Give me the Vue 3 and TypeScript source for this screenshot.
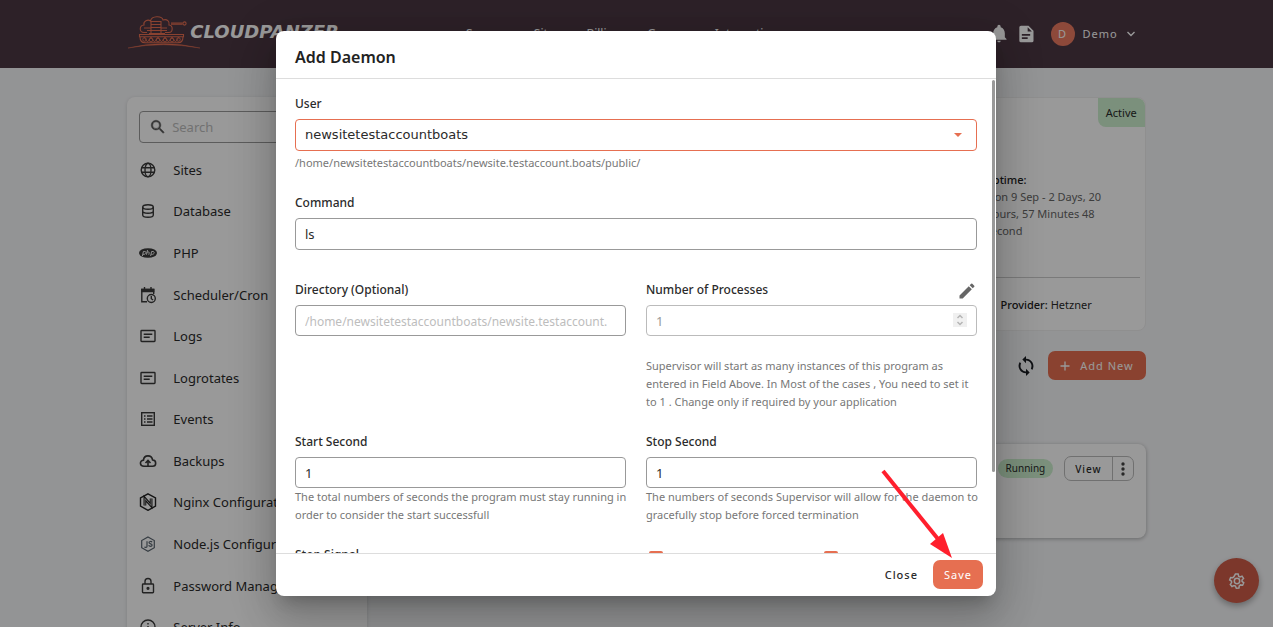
<script setup lang="ts">
import { ref } from 'vue'

interface MenuItem { label: string; icon: string }

const menu: MenuItem[] = [
  { label: 'Sites', icon: 'globe' },
  { label: 'Database', icon: 'database' },
  { label: 'PHP', icon: 'php' },
  { label: 'Scheduler/Cron', icon: 'schedule' },
  { label: 'Logs', icon: 'log' },
  { label: 'Logrotates', icon: 'log' },
  { label: 'Events', icon: 'list' },
  { label: 'Backups', icon: 'backup' },
  { label: 'Nginx Configuration', icon: 'nginx' },
  { label: 'Node.js Configuration', icon: 'node' },
  { label: 'Password Manager', icon: 'lock' },
  { label: 'Server Info', icon: 'info' },
]
const links = ['Servers', 'Sites', 'Billing', 'Groups', 'Integrations']

const search = ref('')
const user = ref('newsitetestaccountboats')
const command = ref('ls')
const directory = ref('')
const processes = ref(1)
const startSecond = ref('1')
const stopSecond = ref('1')
</script>

<template>
  <div class="page">
    <header class="topbar">
      <div class="container bar">
        <a class="brand" href="#">
          <svg class="tank" width="74" height="34" viewBox="0 0 74 34" fill="none" stroke="#e66f51" stroke-width="1.1">
            <path d="M20 17.500h-3c-5 0-5-7 0-7.500-1-4 4-6 6.500-4C24.500.5 35 .5 36 5c4-1.500 7 1.500 6 5 4.500.5 4 7.500 0 7.500h-4" />
            <path d="M24 6.500h10v12H24zM24 9.500h10M24 12.500h10M24 15.500h10M17 13h7M34 13h6M20 15.500h4M34 15.500h6M44 8h11.500M44 9.300h11.500" />
            <circle cx="57.500" cy="8.500" r="1.600" />
            <path d="M12.500 19.500h44v2.200h-44zM13 21.700c0 4 2 6 5 6h33c3 0 5-2 5-6M22 18.500h16" />
            <path d="m17 22 3.500 5 3.500-5 3.500 5 3.500-5 3.500 5 3.500-5 3.500 5 3.500-5 3.500 5 3.500-5" stroke-width=".8" />
            <g stroke-width=".9"><circle cx="17.500" cy="24.500" r="1.800" /><circle cx="24" cy="25" r="1.800" /><circle cx="31" cy="25" r="1.800" /><circle cx="38" cy="25" r="1.800" /><circle cx="45" cy="25" r="1.800" /><circle cx="51.500" cy="24.500" r="1.800" /></g>
            <path d="M1 33Q36 24.500 73 33Q36 26.500 1 33z" fill="#e66f51" stroke-width=".4" />
          </svg>
          <span class="wordmark">CLOUDPANZER</span>
        </a>
        <nav class="links"><a v-for="l in links" :key="l" href="#">{{ l }}</a></nav>
        <div class="account">
          <button class="plain" aria-label="Notifications">
            <svg width="20" height="20" viewBox="0 0 24 24" fill="#fff"><path d="M12 22c1.100 0 2-.9 2-2h-4c0 1.100.9 2 2 2m7-6v-5c0-3.500-1.900-6.400-5-7.200V3a2 2 0 0 0-4 0v.8C6.900 4.600 5 7.500 5 11v5l-2 2v1h18v-1z" /></svg>
          </button>
          <button class="plain" aria-label="Documents">
            <svg width="20" height="20" viewBox="0 0 24 24" fill="#fff" fill-rule="evenodd"><path d="M6 2h9l6 6v12a2 2 0 0 1-2 2H6a2 2 0 0 1-2-2V4a2 2 0 0 1 2-2m8 2v5h5zM7 12v2h10v-2zm0 4v2h7v-2z" /></svg>
          </button>
          <button class="profile">
            <span class="avatar">D</span><span>Demo</span>
            <svg width="10" height="10" viewBox="0 0 10 10" fill="none" stroke="#fff" stroke-width="1.400"><path d="m1.500 3 3.500 3.500L8.500 3" /></svg>
          </button>
        </div>
      </div>
    </header>

    <div class="container body">
      <aside class="sidebar">
        <label class="search">
          <svg width="20" height="20" viewBox="0 0 24 24" fill="#555"><path d="M15.500 14h-.8l-.3-.3a6.500 6.500 0 1 0-.7.7l.3.300v.8l5 5 1.500-1.500zm-6 0a4.500 4.500 0 1 1 0-9 4.500 4.500 0 0 1 0 9" stroke="#555" stroke-width=".6" /></svg>
          <input v-model="search" type="text" placeholder="Search" aria-label="Search">
        </label>
        <ul class="menu">
          <li v-for="m in menu" :key="m.label">
            <a href="#">
              <svg class="mi" viewBox="0 0 18 18" fill="none" stroke="#3a3a3a" stroke-width="1.400">
                <g v-if="m.icon === 'globe'"><circle cx="9" cy="9" r="6.800" /><ellipse cx="9" cy="9" rx="3" ry="6.800" /><path d="M2.500 6.700h13M2.500 11.300h13" /></g>
                <g v-else-if="m.icon === 'database'"><ellipse cx="9" cy="5" rx="5.300" ry="2.300" /><path d="M3.700 5v8c0 3 10.600 3 10.600 0V5M3.700 9c0 2.900 10.600 2.900 10.600 0" /></g>
                <g v-else-if="m.icon === 'php'"><ellipse cx="9" cy="9" rx="9" ry="4.800" fill="#3a3a3a" stroke="none" /><path d="m3.400 12 1-4.500h1.400c2 0 1.300 2.800-.5 2.800H4M7.500 10.700l1-4.700m-.4 2h1.500c1 0 .5 1.400.2 2.700M11.600 12l1-4.500H14c2 0 1.300 2.800-.5 2.800h-1.300" stroke="#eee" stroke-width="1" /></g>
                <g v-else-if="m.icon === 'schedule'"><path d="M8 15.800H2.800V3.500h11.900V8M5.500 1v3M12 1v3" /><path d="M2.800 3.500h11.900v2H2.800z" fill="#3a3a3a" /><circle cx="12.300" cy="12.500" r="4" /><path d="M12.300 10v2.700l1.800 1.300" /></g>
                <g v-else-if="m.icon === 'log'"><rect x="2" y="3.500" width="14" height="11" rx=".7" /><path d="M4.700 7.200h8.600M4.700 10.300h6" /></g>
                <g v-else-if="m.icon === 'list'"><rect x="2.700" y="2.700" width="12.600" height="12.600" /><path d="M5 6h1.500M8 6h5.500M5 9h1.500M8 9h5.500M5 12h1.500M8 12h5.500" /></g>
                <g v-else-if="m.icon === 'backup'" stroke-width="1.600"><path d="M6.500 14.300H5c-4.600 0-4.700-6-.5-6.200C5 2.500 12.700 2.400 13.600 8c4.200.2 4 6.300 0 6.300H6.500M9 14V8.500M6.500 11 9 8.500l2.500 2.500" /></g>
                <g v-else-if="m.icon === 'nginx'" stroke="#222"><path d="M9 .9 16.500 5v8.200L9 17.300 1.500 13.200V5z" /><path d="M5.900 12.500v-7l6.200 7v-7" stroke-width="2.800" /><path d="M5.900 12.500v-7l6.200 7v-7" stroke="#ddd" stroke-width=".7" /></g>
                <g v-else-if="m.icon === 'node'" stroke="#5b6670" stroke-width="1.200"><path d="M9 2 15.300 5.500v7.200L9 16.300 2.700 12.700V5.500z" /><path d="M8 6.300v5.200c0 1.200-2 1.200-2.500.2M13 7.300c-.5-1.300-3-1-3 .3 0 1.700 3.200.8 3.100 2.500-.1 1.600-3 1.500-3.400.1" /></g>
                <g v-else-if="m.icon === 'lock'"><rect x="3.500" y="7" width="11" height="8.800" rx=".7" /><path d="M6 7V4.500c0-4 6-4 6 0V7" /><circle cx="9" cy="11.300" r=".9" fill="#3a3a3a" /></g>
                <g v-else><circle cx="9" cy="9" r="7" /><path d="M9 8v5M9 5v1.500" /></g>
              </svg>
              <span>{{ m.label }}</span>
            </a>
          </li>
        </ul>
      </aside>

      <main class="content">
        <section class="card server">
          <span class="active">Active</span>
          <div class="uptime"><strong>Uptime:</strong><p>Mon 9 Sep - 2 Days, 20 Hours, 57 Minutes 48 Second</p></div>
          <div class="provider"><strong>Provider:</strong> Hetzner</div>
        </section>
        <div class="actions">
          <button class="plain" aria-label="Refresh">
            <svg width="22" height="22" viewBox="0 0 24 24" fill="#1c1f24"><path d="M12 4V1L8 5l4 4V6a6 6 0 0 1 5.300 8.800l1.500 1.500A8 8 0 0 0 12 4m0 14a6 6 0 0 1-5.300-8.800L5.200 7.700A8 8 0 0 0 12 20v3l4-4-4-4z" /></svg>
          </button>
          <button class="primary add"><svg width="10" height="10" viewBox="0 0 10 10" stroke="#fff" stroke-width="1.300"><path d="M5 .5v9M.5 5h9" /></svg>Add New</button>
        </div>
        <section class="card daemon">
          <span class="running">Running</span>
          <div class="group"><button>View</button><button aria-label="More"><svg width="4" height="14" viewBox="0 0 4 14" fill="#444"><circle cx="2" cy="2" r="1.700" /><circle cx="2" cy="7" r="1.700" /><circle cx="2" cy="12" r="1.700" /></svg></button></div>
        </section>
      </main>
    </div>

    <button class="fab" aria-label="Settings">
      <svg width="18" height="18" viewBox="0 0 24 24" fill="none" stroke="#fff" stroke-width="2"><path d="M9.900 2.800h3.600l.7 2.800 1.800 1 2.700-1 2 3-2 2v2l2.300 1.800-1.500 3.200-2.900-.4-1.600 1.200-.4 2.900-3.500.3-1.200-2.700-1.900-.8-2.700 1.200-2.200-2.800 1.700-2.300-.2-2-2.400-1.600 1.300-3.300 2.900.2 1.500-1.300z" /><circle cx="12" cy="12" r="3.600" /></svg>
    </button>

    <div class="backdrop">
      <form class="dialog" role="dialog" aria-labelledby="title" @submit.prevent>
        <h2 id="title">Add Daemon</h2>
        <div class="scroller">
          <div class="field wide">
            <label for="user">User</label>
            <div class="selectbox">
              <select id="user" v-model="user"><option>newsitetestaccountboats</option></select>
              <svg width="8" height="4" viewBox="0 0 8 4" fill="#e66f51"><path d="M0 0h8L4 4z" /></svg>
            </div>
            <p class="path">/home/newsitetestaccountboats/newsite.testaccount.boats/public/</p>
          </div>
          <div class="field wide command">
            <label for="command">Command</label>
            <input id="command" v-model="command" type="text">
          </div>
          <div class="field">
            <label for="directory">Directory (Optional)</label>
            <input id="directory" v-model="directory" type="text" placeholder="/home/newsitetestaccountboats/newsite.testaccount.">
          </div>
          <div class="field">
            <div class="labelrow">
              <label for="processes">Number of Processes</label>
              <button class="plain" type="button" aria-label="Edit"><svg width="20" height="20" viewBox="0 0 24 24" fill="#666"><path d="M3 17.300V21h3.800L17.800 9.900l-3.700-3.700zM20.700 7a1 1 0 0 0 0-1.400l-2.300-2.300a1 1 0 0 0-1.400 0l-1.800 1.800 3.700 3.700z" /></svg></button>
            </div>
            <div class="numberbox">
              <input id="processes" v-model="processes" type="number" disabled>
              <span class="spin"><svg width="8" height="12" viewBox="0 0 8 12" fill="none" stroke="#b5b5b5" stroke-width="1.500"><path d="m1.500 4 2.500-2.500L6.500 4M1.500 8 4 10.500 6.500 8" /></svg></span>
            </div>
            <p class="supervisor">Supervisor will start as many instances of this program as entered in Field Above. In Most of the cases , You need to set it to 1 . Change only if required by your application</p>
          </div>
          <div class="field">
            <label for="start">Start Second</label>
            <input id="start" v-model="startSecond" type="text">
            <p class="hint">The total numbers of seconds the program must stay running in order to consider the start successfull</p>
          </div>
          <div class="field">
            <label for="stop">Stop Second</label>
            <input id="stop" v-model="stopSecond" type="text">
            <p class="hint">The numbers of seconds Supervisor will allow for the daemon to gracefully stop before forced termination</p>
          </div>
          <div class="field">
            <label for="signal">Stop Signal</label>
            <input id="signal" type="text">
          </div>
          <div class="checks">
            <input type="checkbox" checked aria-label="Auto start"><input type="checkbox" checked aria-label="Auto restart">
          </div>
        </div>
        <span class="thumb"></span>
        <footer>
          <button class="close" type="button">Close</button>
          <button class="primary save" type="submit">Save</button>
        </footer>
      </form>
    </div>
    <svg class="arrow" width="72" height="92" viewBox="0 0 72 92"><path d="M2 2 57 70" stroke="#ff1f2d" stroke-width="4" /><path d="M71 89 49 75 62 64z" fill="#ff1f2d" /></svg>
  </div>
</template>

<style>
body { margin: 0; overflow: hidden; }
</style>

<style scoped>
* { box-sizing: border-box; }
.page { position: relative; height: 100vh; overflow: hidden; background: #f6f7f9; color: #2b2b2b; font: 13px/18px "Noto Sans", "Open Sans", sans-serif; }
button, input, select { font: inherit; color: inherit; }
a { color: inherit; text-decoration: none; }
p { margin: 0; }
.plain { display: flex; padding: 0; border: 0; background: none; }
.container { width: 80%; max-width: 1200px; margin: 0 auto; }
.topbar { height: 68px; background: #4b3744; color: #fff; }
.bar { display: flex; align-items: center; height: 68px; }
.brand { display: flex; align-items: center; padding-bottom: 5px; }
.wordmark { font: italic bold 18px/20px "DejaVu Sans", sans-serif; margin-left: -11px; }
.links { display: flex; gap: 26px; flex: 1; padding-left: 127px; font-size: 12px; }
.account { display: flex; align-items: center; gap: 7px; }
.profile { display: flex; align-items: center; gap: 8px; padding: 0 10px 0 8px; border: 0; background: none; letter-spacing: 1px; font-size: 11px; }
.avatar { display: grid; place-items: center; width: 24px; height: 24px; border-radius: 50%; background: #ec7b61; }
.body { display: flex; gap: 26px; padding-top: 29px; }
.sidebar { width: 240px; height: 560px; padding: 14px 12px; border-radius: 8px; background: #fff; box-shadow: 0 1px 4px rgba(0, 0, 0, .15); }
.search { display: flex; align-items: center; gap: 3px; height: 32px; padding: 0 9px; border: 1px solid #999; border-radius: 4px; }
.search input { width: 100%; border: 0; outline: 0; background: none; }
input::placeholder { color: #bdbdbd; opacity: 1; }
.field input::placeholder { font-size: 12px; }
.menu { display: grid; grid-auto-rows: 1fr; height: 499px; margin: 6px 0 0; padding: 0; list-style: none; }
.menu a { display: flex; align-items: center; gap: 16px; height: 100%; white-space: nowrap; }
.mi { width: 18px; height: 18px; flex: none; }
.content { flex: 1; min-width: 0; }
.card { position: relative; border-radius: 8px; background: #fff; }
.server { height: 234px; border: 1px solid #eee; font-size: 11px; line-height: 17px; }
.active { position: absolute; top: 0; right: 0; padding: 6px 8px; border-radius: 0 8px 0 8px; background: #cdf0cf; }
.uptime { width: 160px; height: 179px; margin-left: auto; padding: 73px 20px 0 0; color: #666; }
.uptime strong, .provider strong { color: #222; font-weight: 500; }
.provider { margin: 0 5px; padding: 18px 48px; border-top: 1px solid #ccc; text-align: right; }
.actions { display: flex; justify-content: flex-end; align-items: center; gap: 11px; margin-top: 20px; }
.primary { border: 0; border-radius: 7px; background: #e66f51; color: #fff; letter-spacing: 1px; font-size: 11px; }
.add { display: flex; align-items: center; gap: 10px; height: 29px; padding: 0 12px; }
.daemon { display: flex; justify-content: flex-end; align-items: flex-start; gap: 11px; height: 94px; margin-top: 64px; padding: 12px; box-shadow: 0 1px 4px rgba(0, 0, 0, .3); }
.running { margin-top: 3px; padding: 0 8px; border-radius: 10px; background: #cdf0cf; font-size: 10px; line-height: 19px; }
.group { display: flex; height: 25px; border: 1px solid #bbb; border-radius: 7px; }
.group button { display: grid; place-items: center; padding: 0 10px; border: 0; background: none; font-size: 10px; font-weight: 500; letter-spacing: 1px; }
.group button + button { padding: 0 8px; border-left: 1px solid #bbb; }
.fab { position: absolute; right: 14px; bottom: 24px; display: grid; place-items: center; width: 45px; height: 45px; border: 0; border-radius: 50%; background: #cf5c48; box-shadow: 0 3px 6px rgba(0, 0, 0, .3); }
.backdrop { position: absolute; inset: 0; display: flex; align-items: center; justify-content: center; padding-right: 1px; background: rgba(0, 0, 0, .4); }
.dialog { position: relative; display: flex; flex-direction: column; width: 720px; max-width: 94%; height: calc(100% - 62px); overflow: hidden; border-radius: 8px; background: #fff; box-shadow: 0 11px 15px -7px rgba(0, 0, 0, .2), 0 24px 38px 3px rgba(0, 0, 0, .14), 0 9px 46px 8px rgba(0, 0, 0, .12); }
h2 { margin: 0; padding: 17px 19px 12px; font-size: 16px; line-height: 18px; font-weight: 600; color: #222; border-bottom: 1px solid #ddd; }
.scroller { display: grid; flex: 1; grid-template-columns: 1fr 1fr; grid-template-rows: 99px 87px 152px 113px 60px; column-gap: 20px; min-height: 0; padding: 16px 19px 0; overflow: hidden; }
.wide { grid-column: 1 / -1; }
.field { min-width: 0; }
.field label { display: block; height: 18px; margin-bottom: 6px; font-size: 12px; font-weight: 500; }
.field input, .field select { display: block; width: 100%; height: 31px; padding: 0 9px; border: 1px solid #999; border-radius: 4px; outline: 0; background: #fff; }
.wide input, .field select { height: 32px; }
.field select { appearance: none; border-color: #e66f51; font-family: "DejaVu Sans", sans-serif; }
.selectbox, .numberbox { position: relative; }
.selectbox svg { position: absolute; right: 15px; top: 14px; }
.field p { font-size: 11px; color: #777; }
.field p.path { padding-top: 3px; }
.field p.hint { margin-right: -10px; }
.field p.supervisor { padding-top: 21px; }
.labelrow { display: flex; justify-content: space-between; }
.labelrow button { height: 20px; }
.field input:disabled { border-color: #bbb; color: #999; appearance: textfield; }
.spin { position: absolute; right: 10px; top: 8px; display: grid; place-items: center; width: 14px; height: 14px; background: #f0f0f0; }
.checks { display: flex; gap: 161px; padding: 5px 3px 0; }
.checks input { width: 14px; height: 14px; margin: 0; accent-color: #e66f51; }
.thumb { position: absolute; top: 49px; right: 1px; width: 3px; height: 392px; border-radius: 2px; background: #999; }
footer { display: flex; justify-content: flex-end; gap: 15px; height: 43px; padding: 6px 13px; border-top: 1px solid #ddd; }
.close { height: 29px; padding: 0; border: 0; background: none; font-size: 11px; letter-spacing: 1px; font-weight: 500; }
.save { height: 29px; padding: 0 11px; }
.arrow { position: absolute; left: 881px; top: 469px; }
</style>
